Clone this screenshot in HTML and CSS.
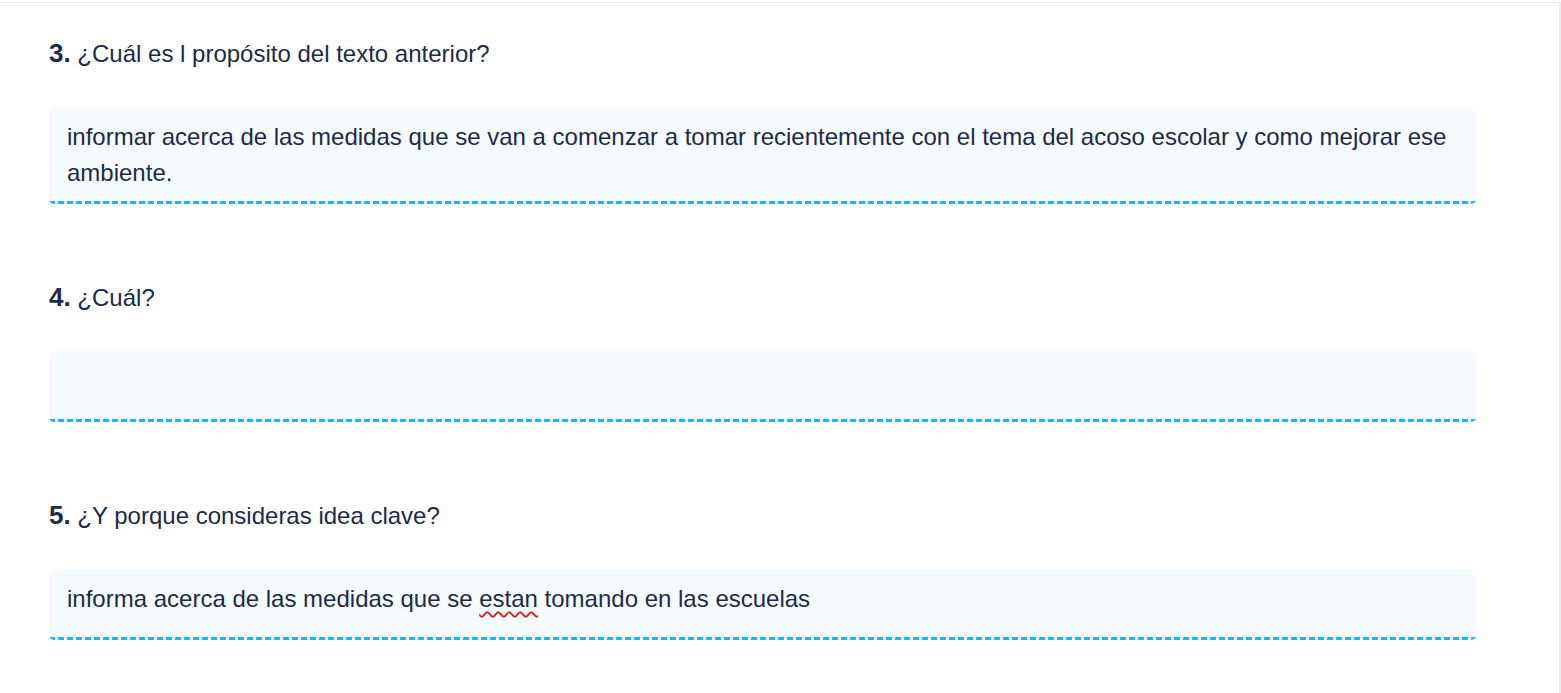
FILE: index.html
```html
<!DOCTYPE html>
<html lang="es">
<head>
<meta charset="utf-8">
<title>Preguntas</title>
<link rel="stylesheet" href="styles.css">
</head>
<body>
<div class="page">
  <section class="item">
    <p class="question"><span class="num">3.</span> ¿Cuál es l propósito del texto anterior?</p>
    <div class="answer">informar acerca de las medidas que se van a comenzar a tomar recientemente con el tema del acoso escolar y como mejorar ese ambiente.</div>
  </section>
  <section class="item">
    <p class="question"><span class="num">4.</span> ¿Cuál?</p>
    <div class="answer single"></div>
  </section>
  <section class="item">
    <p class="question"><span class="num">5.</span> ¿Y porque consideras idea clave?</p>
    <div class="answer single">informa acerca de las medidas que se <span class="spell">estan</span> tomando en las escuelas</div>
  </section>
</div>
</body>
</html>
```

FILE: styles.css
```css
html, body {
  margin: 0;
  padding: 0;
  background: #ffffff;
}

body {
  font-family: "Liberation Sans", Arial, sans-serif;
  color: #1e2a4a;
}

.page {
  margin-top: 2px;
  height: 691px;
  box-sizing: border-box;
  border-top: 1px solid #e6e6e6;
  border-right: 2px solid #ececec;
  padding: 37px 0 0 49px;
  width: 1561px;
}

.item {
  width: 1427px;
  margin-bottom: 80px;
}

.question {
  margin: 0 0 39px 0;
  font-size: 24px;
  line-height: 28px;
  color: #1e2a4a;
}

.num {
  font-weight: bold;
  font-size: 26px;
  line-height: 1;
  color: #1b2b4b;
}

.answer {
  box-sizing: border-box;
  background:
    repeating-linear-gradient(90deg, #1eb3f6 0 6px, transparent 6px 9px) left bottom / 100% 3px no-repeat,
    #f5fbfe;
  border-radius: 8px 8px 5px 5px;
  padding: 12px 18px 13px 18px;
  font-size: 24px;
  line-height: 36px;
  color: #1e2a4a;
}

.answer.single {
  min-height: 71px;
}

.spell {
  text-decoration: underline wavy #e02020;
  text-decoration-thickness: 1.5px;
  text-underline-offset: 4px;
}
```
